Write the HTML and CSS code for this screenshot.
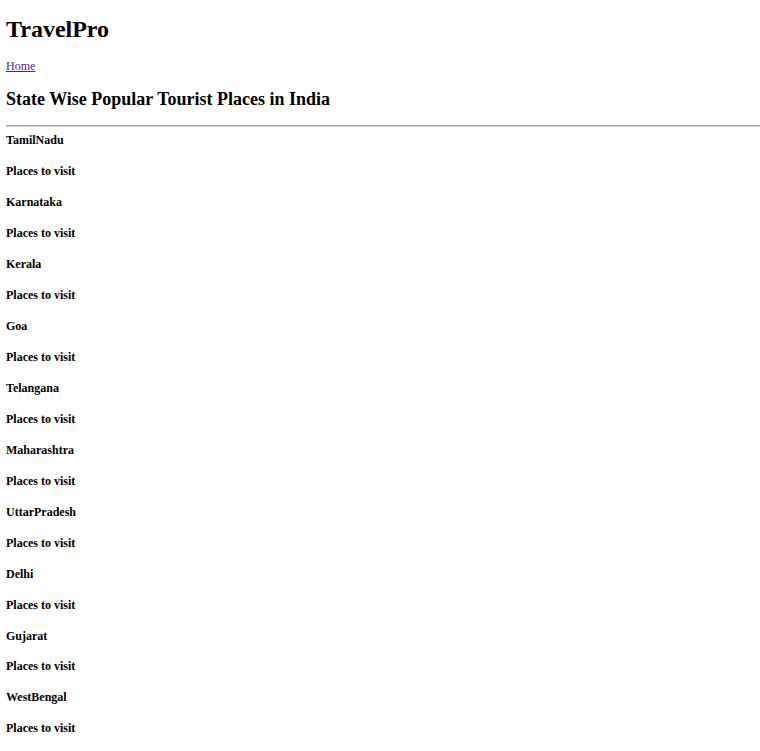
FILE: index.html
```html
<!DOCTYPE html>
<html lang="en">
<head>
<meta charset="utf-8">
<title>TravelPro</title>
<link rel="stylesheet" href="styles.css">
</head>
<body>
<header class="site-header">
  <h1 class="brand">TravelPro</h1>
  <nav class="nav"><a class="nav-link" href="#">Home</a></nav>
  <h2 class="title">State Wise Popular Tourist Places in India</h2>
</header>
<hr class="divider">
<main class="states">
  <h4 class="state">TamilNadu</h4>
  <h4 class="visit">Places to visit</h4>
  <h4 class="state">Karnataka</h4>
  <h4 class="visit">Places to visit</h4>
  <h4 class="state">Kerala</h4>
  <h4 class="visit">Places to visit</h4>
  <h4 class="state">Goa</h4>
  <h4 class="visit">Places to visit</h4>
  <h4 class="state">Telangana</h4>
  <h4 class="visit">Places to visit</h4>
  <h4 class="state">Maharashtra</h4>
  <h4 class="visit">Places to visit</h4>
  <h4 class="state">UttarPradesh</h4>
  <h4 class="visit">Places to visit</h4>
  <h4 class="state">Delhi</h4>
  <h4 class="visit">Places to visit</h4>
  <h4 class="state">Gujarat</h4>
  <h4 class="visit">Places to visit</h4>
  <h4 class="state">WestBengal</h4>
  <h4 class="visit">Places to visit</h4>
</main>
</body>
</html>
```
FILE: styles.css
```css
html, body {
  margin: 0;
  padding: 0;
  background: #ffffff;
}
body {
  padding: 15px 0 20px 6px;
  font-family: "Liberation Serif", "Times New Roman", serif;
  color: #000000;
}
.site-header {
  display: flex;
  flex-direction: column;
  align-items: flex-start;
}
.brand {
  margin: 0;
  font-size: 24px;
  line-height: 28px;
  font-weight: bold;
}
.nav {
  margin-top: 16px;
  font-size: 12px;
  line-height: 14px;
}
.nav-link {
  color: #551a8b;
  text-decoration: underline;
}
.title {
  margin: 16px 0 0;
  font-size: 18px;
  line-height: 21px;
  font-weight: bold;
}
.divider {
  margin: 15px 0 0;
  height: 0;
  border: none;
  border-top: 1px solid #9a9a9a;
  border-bottom: 1px solid #d8d8d8;
}
.states {
  display: flex;
  flex-direction: column;
  gap: 16.98px;
  padding-top: 6px;
}
.state, .visit {
  margin: 0;
  font-size: 12px;
  line-height: 14px;
  font-weight: bold;
}
```
